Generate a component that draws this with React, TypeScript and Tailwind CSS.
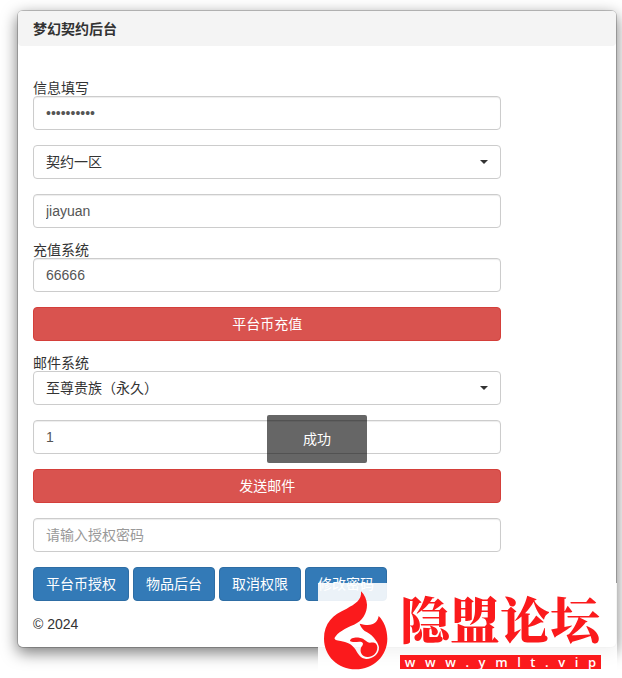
import type { ReactNode } from "react";

const fieldClass =
  "block w-full h-[34px] px-3 rounded border border-[#ccc] bg-white text-sm text-[#555] placeholder:text-[#999] shadow-[inset_0_1px_1px_rgba(0,0,0,0.075)] focus:outline-none focus:border-[#66afe9]";

const actions = ["平台币授权", "物品后台", "取消权限", "修改密码"];
const siteUrl = "www.ymlt.vip";

function Label({ htmlFor, children }: { htmlFor: string; children: ReactNode }) {
  return (
    <label htmlFor={htmlFor} className="block text-sm leading-[15px]">
      {children}
    </label>
  );
}

function Select({ id, label, options }: { id: string; label?: string; options: string[] }) {
  return (
    <div className="relative">
      <select
        id={id}
        aria-label={label}
        className="block w-full h-[34px] px-3 rounded border border-[#ccc] bg-white text-sm text-[#333] appearance-none focus:outline-none"
      >
        {options.map((option) => (
          <option key={option}>{option}</option>
        ))}
      </select>
      <svg
        viewBox="0 0 8 4"
        className="absolute right-[13px] top-[15px] w-2 h-1 pointer-events-none"
        fill="#333"
        aria-hidden="true"
      >
        <path d="M0 0h8L4 4z" />
      </svg>
    </div>
  );
}

function DangerButton({ children }: { children: ReactNode }) {
  return (
    <button
      type="button"
      className="block w-full h-[34px] rounded border border-[#d43f3a] bg-[#d9534f] hover:bg-[#c9302c] text-sm text-white"
    >
      {children}
    </button>
  );
}

function ForumBadge() {
  return (
    <div className="absolute -right-px -bottom-[31px] w-[299px] h-[95px] bg-white/90 flex items-start text-[#fb1a1c]">
      <svg viewBox="18 30 201 246" className="ml-1 mt-[7px] w-[67px] h-[82px] shrink-0" fill="currentColor" aria-hidden="true">
        <path d="M135 34C138 60 118 72 92 86C50 104 24 130 24 176C24 228 66 268 119 268C172 268 214 228 214 176C214 148 204 124 188 108C184 130 168 141 131 131C134 140 139 147 146 153C165 160 186 184 189 202C190 224 168 238 150 237C134 236 126 222 118 208C108 192 92 186 74 183C62 181 54 179 56 173C64 158 88 144 114 134C140 122 153 100 153 74C152 58 146 44 135 34Z" />
        <path d="M102 183C102 174 118 171 130 173C148 175 150 188 162 188C174 186 183 188 184 202C184 222 168 232 154 231C140 230 132 220 134 208C135 198 146 194 138 187C130 182 112 190 102 183Z" />
      </svg>
      <div className="ml-[11px] mt-2 w-[201px]">
        <p className="h-16 font-['Noto_Serif_CJK_SC','Noto_Sans_CJK_SC',serif] text-[50px] leading-[52px] font-black whitespace-nowrap">
          隐盟论坛
        </p>
        <p className="flex justify-around h-[14px] bg-[#fb1a1c] font-['Open_Sans',sans-serif] text-[13px] leading-[15px] font-semibold text-white">
          {siteUrl.split("").map((char, i) => (
            <span key={i}>{char}</span>
          ))}
        </p>
      </div>
    </div>
  );
}

export default function App() {
  return (
    <div className="pt-[10px] pb-[30px] pl-[17px] pr-[5px] bg-white font-['Liberation_Sans','Noto_Sans_CJK_SC',sans-serif] text-sm text-[#333]">
      <main className="relative rounded-md border border-black/20 bg-white bg-clip-padding shadow-[0_5px_15px_rgba(0,0,0,0.5)]">
        <header className="h-[35px] px-[15px] rounded bg-[#f4f4f4]">
          <h1 className="text-sm leading-[36px] font-bold">梦幻契约后台</h1>
        </header>

        <form className="w-5/6 px-[15px] pt-[35px] flex flex-col gap-[15px]">
          <div>
            <Label htmlFor="password">信息填写</Label>
            <input id="password" type="password" defaultValue="1234567890" className={fieldClass} />
          </div>
          <Select id="zone" label="选区" options={["契约一区"]} />
          <input type="text" aria-label="账号" defaultValue="jiayuan" className={fieldClass} />

          <div>
            <Label htmlFor="amount">充值系统</Label>
            <input id="amount" type="text" defaultValue="66666" className={fieldClass} />
          </div>
          <DangerButton>平台币充值</DangerButton>

          <div>
            <Label htmlFor="item">邮件系统</Label>
            <Select id="item" options={["至尊贵族（永久）"]} />
          </div>
          <input type="text" aria-label="数量" defaultValue="1" className={fieldClass} />
          <DangerButton>发送邮件</DangerButton>

          <input type="password" aria-label="授权密码" placeholder="请输入授权密码" className={fieldClass} />
          <div className="flex gap-1">
            {actions.map((action) => (
              <button
                key={action}
                type="button"
                className="h-[34px] px-3 rounded border border-[#2e6da4] bg-[#337ab7] hover:bg-[#286090] text-sm text-white whitespace-nowrap"
              >
                {action}
              </button>
            ))}
          </div>
        </form>

        <footer className="px-[15px] pt-[13px] pb-[13px] leading-5">© 2024</footer>

        {/* Toast */}
        <div
          role="status"
          className="absolute left-1/2 top-[404px] w-[100px] h-12 -translate-x-1/2 flex items-center justify-center rounded-xs bg-black/60 text-white"
        >
          成功
        </div>

        <ForumBadge />
      </main>
    </div>
  );
}
